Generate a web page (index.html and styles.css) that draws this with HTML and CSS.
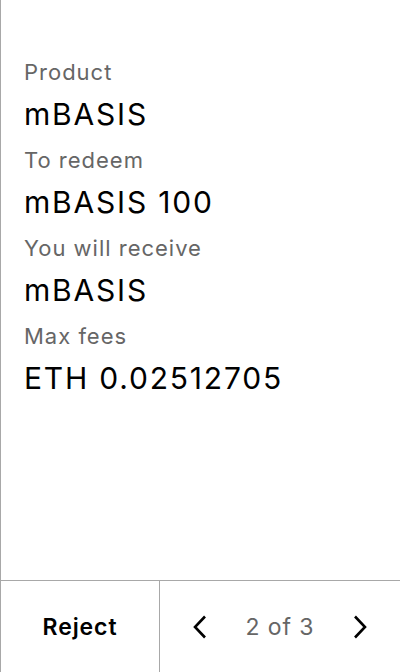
FILE: index.html
```html
<!DOCTYPE html>
<html>
<head>
<meta charset="utf-8">
<link rel="stylesheet" href="styles.css">
</head>
<body>
<div class="screen">
  <div class="content">
    <div class="field">
      <div class="label">Product</div>
      <div class="value">mBASIS</div>
    </div>
    <div class="field">
      <div class="label">To redeem</div>
      <div class="value">mBASIS 100</div>
    </div>
    <div class="field">
      <div class="label">You will receive</div>
      <div class="value">mBASIS</div>
    </div>
    <div class="field">
      <div class="label">Max fees</div>
      <div class="value">ETH 0.02512705</div>
    </div>
  </div>
  <div class="footer">
    <div class="reject">Reject</div>
    <div class="pager">
      <svg class="chev" width="14" height="24" viewBox="0 0 14 24"><path d="M12 1.5 L2 12 L12 22.5" fill="none" stroke="#000" stroke-width="2.6"/></svg>
      <span class="count">2 of 3</span>
      <svg class="chev" width="14" height="24" viewBox="0 0 14 24"><path d="M2 1.5 L12 12 L2 22.5" fill="none" stroke="#000" stroke-width="2.6"/></svg>
    </div>
  </div>
</div>
</body>
</html>
```
FILE: styles.css
```css
* { box-sizing: border-box; }
html, body { margin: 0; padding: 0; background: #fff; }
body { font-family: Inter, "Noto Sans", sans-serif; color: #000; }
.screen {
  width: 400px;
  height: 672px;
  border-left: 1px solid #a8a8a8;
  display: flex;
  flex-direction: column;
}
.content {
  flex: 1;
  padding: 54px 23px 0 23px;
  display: flex;
  flex-direction: column;
  gap: 4px;
}
.label {
  font-size: 22px;
  line-height: 36px;
  letter-spacing: 0.045em;
  color: #666;
}
.value {
  font-size: 30px;
  line-height: 48px;
  letter-spacing: 0.06em;
  color: #000;
}
.footer {
  height: 92px;
  border-top: 1px solid #a8a8a8;
  display: flex;
}
.reject {
  width: 159px;
  display: flex;
  align-items: center;
  justify-content: center;
  font-size: 23px;
  font-weight: 600;
  letter-spacing: 0.04em;
  border-right: 1px solid #a8a8a8;
}
.pager {
  flex: 1;
  display: flex;
  align-items: center;
  justify-content: space-between;
  padding: 0 33px;
}
.count {
  font-size: 23px;
  letter-spacing: 0.04em;
  color: #666;
}
.chev { display: block; }
```
